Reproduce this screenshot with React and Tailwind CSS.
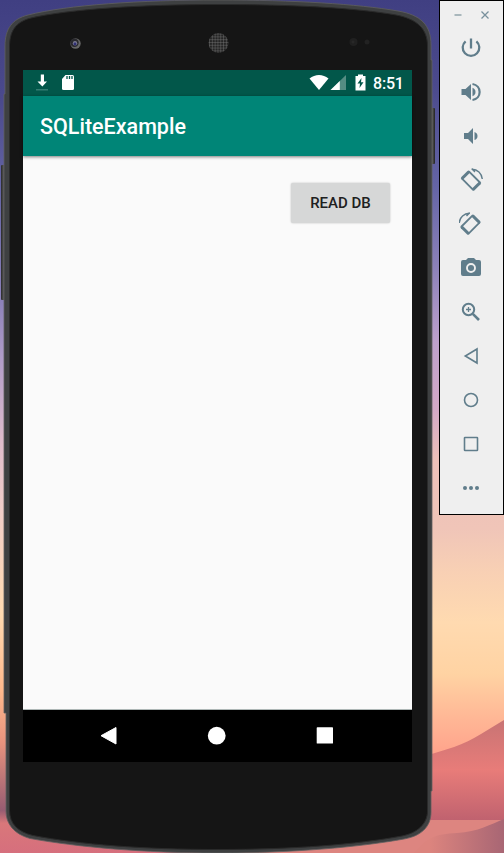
const C = '#607d8b';

function Wallpaper() {
  return (
    <svg className="absolute inset-0 h-full w-full" viewBox="0 0 504 853" preserveAspectRatio="none" aria-hidden="true">
      <defs>
        <linearGradient id="sky" x1="0" y1="0" x2="0" y2="853" gradientUnits="userSpaceOnUse">
          <stop offset="0" stopColor="#403f82" />
          <stop offset="0.1" stopColor="#4b4a8d" />
          <stop offset="0.22" stopColor="#6565a6" />
          <stop offset="0.31" stopColor="#8a80b8" />
          <stop offset="0.4" stopColor="#bda0cb" />
          <stop offset="0.48" stopColor="#d3a9c6" />
          <stop offset="0.54" stopColor="#edc0b8" />
          <stop offset="0.62" stopColor="#f0c5b8" />
          <stop offset="0.67" stopColor="#f8d0b4" />
          <stop offset="0.73" stopColor="#ffdab0" />
          <stop offset="0.79" stopColor="#ffd3a3" />
          <stop offset="0.84" stopColor="#ffb896" />
          <stop offset="0.89" stopColor="#ffa08a" />
          <stop offset="1" stopColor="#d66f7d" />
        </linearGradient>
        <linearGradient id="skyLeft" x1="0" y1="0" x2="0" y2="853" gradientUnits="userSpaceOnUse">
          <stop offset="0" stopColor="#403f82" />
          <stop offset="0.12" stopColor="#4b4a8d" />
          <stop offset="0.22" stopColor="#6464a4" />
          <stop offset="0.35" stopColor="#8a80b8" />
          <stop offset="0.42" stopColor="#b09cc8" />
          <stop offset="0.52" stopColor="#dfbccb" />
          <stop offset="0.6" stopColor="#f0cdc8" />
          <stop offset="0.72" stopColor="#ffdab0" />
          <stop offset="0.81" stopColor="#ffb88c" />
          <stop offset="0.87" stopColor="#e8937e" />
          <stop offset="0.95" stopColor="#965c72" />
          <stop offset="0.965" stopColor="#d9777a" />
          <stop offset="1" stopColor="#d66f7d" />
        </linearGradient>
        <linearGradient id="hill" x1="0" y1="720" x2="0" y2="820" gradientUnits="userSpaceOnUse">
          <stop offset="0" stopColor="#c87474" />
          <stop offset="0.5" stopColor="#e87c79" />
          <stop offset="1" stopColor="#c0626f" />
        </linearGradient>
        <linearGradient id="lake" x1="430" y1="0" x2="504" y2="0" gradientUnits="userSpaceOnUse">
          <stop offset="0" stopColor="#dc847e" />
          <stop offset="1" stopColor="#a86674" />
        </linearGradient>
      </defs>
      <path d="M0 0H504V853H0Z" fill="url(#sky)" />
      <path d="M0 0H218V853H0Z" fill="url(#skyLeft)" />
      <path d="M425 756C445 750 464 745 481 734L504 720V820H425Z" fill="url(#hill)" />
      <path d="M218 820H504V853H218Z" fill="#dd8580" />
      <path d="M414 853C426 838 435 834 457 833C478 832 491 824 504 819V853Z" fill="url(#lake)" />
    </svg>
  );
}

function PhoneBody() {
  const outline = 'M5 94V46C5 29 12 19 28 15C67 5 140 0 218 0C295 0 357 4 398 11C421 15 431 25 431 45V60H432V791H431V812C431 827 421 836 404 839C360 847 294 853 218 853C143 853 77 847 30 838.500C14 834 6 824 6 811V713H4V94Z';
  const face = 'M9.500 47C9.500 32 15 22 31 18C70 9 142 4.500 218 4.500C294 4.500 357 8 396 15C417 19 427.500 29 427.500 46V811C427.500 824 417 833 402 836C357 844.500 293 849.500 218 849.500C143 849.500 80 844.500 33 835.500C18 832 9.500 824 9.500 810Z';
  return (
    <svg className="absolute inset-0 h-full w-full" viewBox="0 0 504 853" aria-hidden="true">
      <defs>
        <linearGradient id="key">
          <stop offset="0" stopColor="#2a2a2a" />
          <stop offset="0.5" stopColor="#555" />
          <stop offset="1" stopColor="#222" />
        </linearGradient>
        <clipPath id="speaker"><circle cx="218.500" cy="43" r="10" /></clipPath>
        <pattern id="mesh" width="2.800" height="2.800" patternUnits="userSpaceOnUse">
          <path d="M0 0H2.800V2.800" fill="none" stroke="#777" strokeWidth="0.8" />
        </pattern>
      </defs>
      <rect x="1" y="165" width="5" height="135" rx="1" fill="url(#key)" />
      <rect x="430" y="108" width="5" height="56" rx="1" fill="url(#key)" />
      <path d={outline} fill="#3e4041" stroke="#606060" strokeWidth="0.8" />
      <path d={face} fill="#151515" stroke="#2a2a2a" strokeWidth="1" />
      <circle cx="75.500" cy="43.500" r="5.200" fill="#666" />
      <circle cx="74.500" cy="42.800" r="4.200" fill="#29292e" />
      <circle cx="75" cy="43.200" r="2.200" fill="#7a7a91" />
      <circle cx="75" cy="44" r="1.400" fill="#303075" />
      <circle cx="218.500" cy="43" r="10" fill="#252525" />
      <rect x="208" y="33" width="21" height="21" fill="url(#mesh)" clipPath="url(#speaker)" />
      <circle cx="353.500" cy="42" r="4" fill="#202020" />
      <circle cx="353" cy="42" r="1.500" fill="#282828" />
      <circle cx="367" cy="42" r="2.500" fill="#222" />
    </svg>
  );
}

function StatusBar() {
  return (
    <div className="flex h-[26px] shrink-0 items-center justify-between bg-[#02574a] pr-[8px] pl-[13px] text-white">
      <div className="flex items-center gap-[13px]">
        <svg width="13" height="18" viewBox="0 0 13 18"><path d="M4.800 .5H8V7.500H11L6.400 12.500L1.500 7.500H4.800Z" fill="white" /><path d="M0 15H12V16.500H0Z" fill="#347d72" /></svg>
        <svg width="13" height="18" viewBox="0 0 13 18"><path d="M3.500 1H10.500Q12 1 12 2.500V14.500Q12 16 10.500 16H1.500Q0 16 0 14.500V5Z" fill="white" /><path d="M5 2V5M7.500 2V5M10 2V5" stroke="#02574a" strokeWidth="1.300" /></svg>
      </div>
      <div className="flex items-center">
        <svg width="20" height="18" viewBox="0 0 20 18"><path d="M.5 4.500C6 -.3 14 -.3 19.500 4.500L10 16Z" fill="white" /></svg>
        <svg className="ml-[1px]" width="17" height="18" viewBox="0 0 17 18"><path d="M16 1V16H.5Z" fill="#558d83" /><path d="M9.800 7V16H.5Z" fill="white" /></svg>
        <svg className="ml-[8px]" width="11" height="18" viewBox="0 0 11 18"><path d="M3 .5H8V2H10.500V16.500H.5V2H3Z" fill="white" /><path d="M6.500 4L2.500 9.500H5L4.500 14L8.500 8.200H6Z" fill="#02574a" /></svg>
        <span className="ml-[7px] w-[31px] pt-[1px] text-[16px] leading-[25px] font-medium tracking-[-0.200px] whitespace-nowrap">8:51</span>
      </div>
    </div>
  );
}

function NavigationBar() {
  return (
    <nav className="flex h-[53px] shrink-0 items-center justify-center gap-[86px] border-t border-[#aeb7b6] bg-black pr-[1px]">
      <svg width="22" height="22" viewBox="0 0 22 22"><path d="M18 2.500V19L3 10.700Z" fill="white" stroke="white" strokeLinejoin="round" /></svg>
      <svg width="22" height="22" viewBox="0 0 22 22"><circle cx="10.700" cy="10.700" r="8.900" fill="white" /></svg>
      <svg width="22" height="22" viewBox="0 0 22 22"><rect x="2.700" y="2.300" width="16.300" height="16.300" rx=".7" fill="white" /></svg>
    </nav>
  );
}

function ToolIcon({ name }) {
  const solid = { fill: C };
  const line = { fill: 'none', stroke: C, strokeWidth: 1.6 };
  const icons = {
    power: <path d="M12 2.500V12.500M6.600 5.300A8.300 8.300 0 1 0 17.400 5.300" fill="none" stroke={C} strokeWidth="2.300" />,
    loud: <><path d="M2.500 9V15H6.500L12 20V4L6.500 9Z" {...solid} /><path d="M13.500 7.800V16.200Q16.500 15 16.500 12Q16.500 9 13.500 7.800Z" {...solid} /><path d="M13.500 4C23 5.500 23 18.500 13.500 20" fill="none" stroke={C} strokeWidth="2.200" /></>,
    quiet: <><path d="M5 9V15H9L14 20V4L9 9Z" {...solid} /><path d="M15.500 8V16Q18.500 15 18.500 12Q18.500 9 15.500 8Z" {...solid} /></>,
    left: (
      <>
        <g transform="translate(12 12.600) rotate(45)">
          <rect x="-9.300" y="-5.900" width="18.600" height="11.800" rx="1.600" fill={C} />
          <rect x="-6.300" y="-4.100" width="12.600" height="8.200" fill="#efefef" />
        </g>
        <path d="M12.500 1.300C18.500 1 22.800 5.500 23.300 11M13 1L16 4" fill="none" stroke={C} strokeWidth="1.400" />
      </>
    ),
    camera: <><path d="M9 2H15L17 4H20Q22 4 22 6V18Q22 20 20 20H4Q2 20 2 18V6Q2 4 4 4H7Z" {...solid} /><circle cx="12" cy="12" r="4" fill="none" stroke="#efefef" strokeWidth="1.900" /></>,
    zoom: <><circle cx="9.500" cy="9.500" r="5.700" fill="none" stroke={C} strokeWidth="2" /><path d="M9.500 7V12M7 9.500H12" {...line} strokeWidth="1.300" /><path d="M13.800 13.800L20 20" {...line} strokeWidth="2.600" /></>,
    back: <path d="M18 5V19L6.300 12Z" {...line} />,
    home: <circle cx="12" cy="12" r="6.500" {...line} />,
    overview: <rect x="5.500" y="5.500" width="13" height="13" rx=".5" {...line} />,
    more: <><circle cx="6" cy="12" r="2" {...solid} /><circle cx="12" cy="12" r="2" {...solid} /><circle cx="18" cy="12" r="2" {...solid} /></>,
  };
  return (
    <button className="flex h-11 w-full items-center justify-center" aria-label={name}>
      <svg width="24" height="24" viewBox="0 0 24 24">
        {name === 'right' ? <g transform="translate(23.500 0) scale(-1 1)">{icons.left}</g> : icons[name]}
      </svg>
    </button>
  );
}

function Toolbar() {
  return (
    <aside className="h-[515px] w-[65px] shrink-0 border border-black bg-[#efefef] pr-[1px]">
      <div className="flex h-[25px] items-center justify-end gap-[17px] pt-[3px] pr-[12px]">
        <svg width="10" height="10"><path d="M1.500 5H8.500" stroke="#8ba0a7" strokeWidth="1.400" /></svg>
        <svg width="10" height="10"><path d="M1.500 1.500L8.500 8.500M8.500 1.500L1.500 8.500" stroke="#78909c" strokeWidth="1.300" /></svg>
      </div>
      {['power', 'loud', 'quiet', 'left', 'right', 'camera', 'zoom', 'back', 'home', 'overview', 'more'].map((name) => <ToolIcon key={name} name={name} />)}
    </aside>
  );
}

export default function App() {
  return (
    <div className="relative h-[853px] w-[504px] overflow-hidden font-['Roboto',sans-serif]">
      <Wallpaper />
      <PhoneBody />
      <div className="relative flex items-start justify-between">
        <main className="mt-[70px] ml-[23px] flex h-[692px] w-[389px] flex-col bg-[#fafafa]">
          <StatusBar />
          <header className="z-10 flex h-[60px] shrink-0 items-center bg-[#008577] pl-[17px] shadow-[0_1px_3px_rgba(0,0,0,0.5)]">
            <h1 className="pt-[2px] text-[21.500px] font-medium whitespace-nowrap text-white">SQLiteExample</h1>
          </header>
          <section className="flex flex-1 items-start justify-end pt-[27px] pr-[22px]">
            <button className="h-[40px] w-[99px] rounded-[2px] bg-[#d6d7d7] pt-[1px] text-[15px] font-medium text-[#202020] shadow-[0_0_2px_rgba(0,0,0,0.25)]">READ DB</button>
          </section>
          <NavigationBar />
        </main>
        <Toolbar />
      </div>
    </div>
  );
}
